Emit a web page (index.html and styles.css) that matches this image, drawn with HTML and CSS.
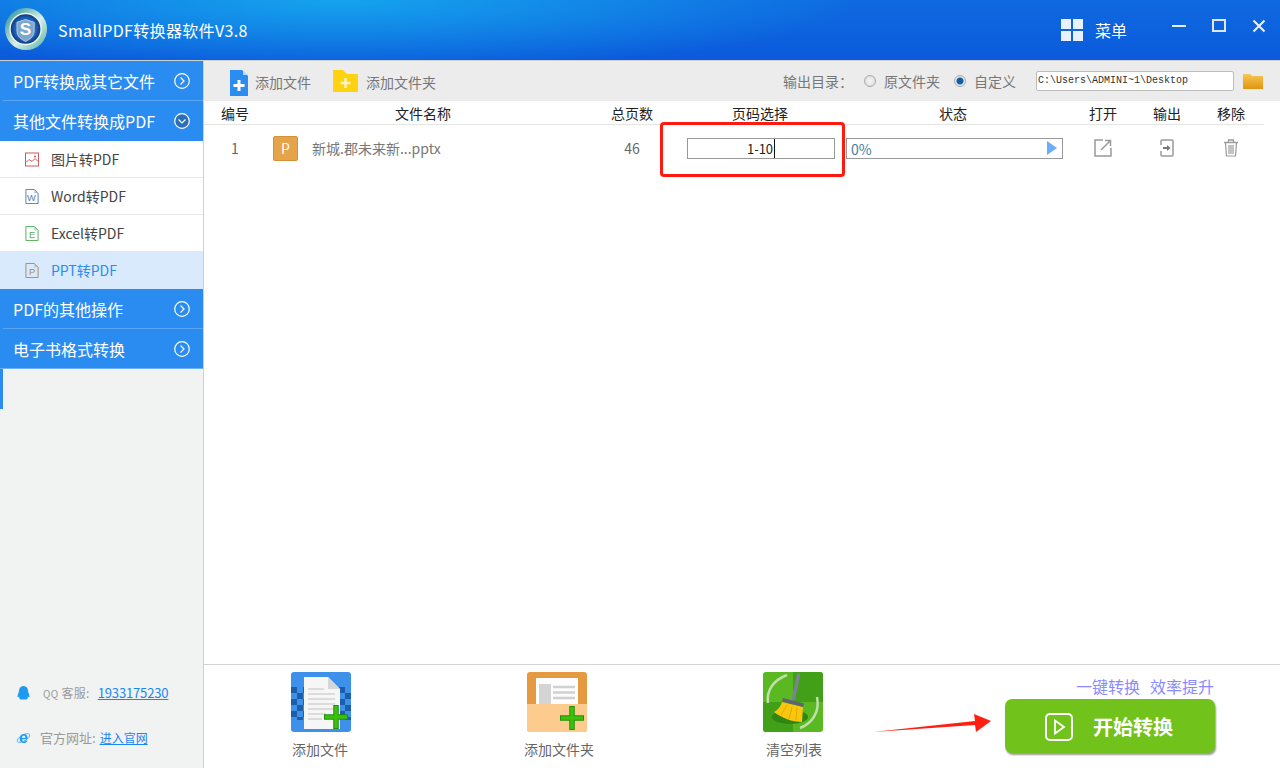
FILE: index.html
```html
<!DOCTYPE html>
<html lang="zh-CN">
<head>
<meta charset="utf-8">
<title>SmallPDF转换器软件V3.8</title>
<link rel="stylesheet" href="styles.css">
</head>
<body>
<div class="app">
  <header class="titlebar">
    <svg class="logo" viewBox="0 0 46 46">
      <defs>
        <linearGradient id="ring" x1="0" y1="0" x2="1" y2="1"><stop offset="0" stop-color="#17888f"/><stop offset=".55" stop-color="#d8efe8"/><stop offset="1" stop-color="#4fae9e"/></linearGradient>
        <radialGradient id="core" cx=".5" cy=".5" r=".5"><stop offset="0" stop-color="#2a7fd0"/><stop offset=".75" stop-color="#1b5fb8"/><stop offset="1" stop-color="#123a78"/></radialGradient>
      </defs>
      <circle cx="22" cy="22" r="22" fill="url(#ring)"/>
      <circle cx="21.500" cy="22" r="17" fill="#e6f4f2"/>
      <circle cx="21.500" cy="22" r="15.500" fill="url(#core)"/>
      <path d="M12.500 15l9-3 9 3v9c0 6-4.500 8.500-9 11-4.500-2.500-9-5-9-11z" fill="#7fa6cc" stroke="#b9cfe4" stroke-width="1"/>
      <text x="21.500" y="28.500" class="logo-s">S</text>
    </svg>
    <div class="app-title">SmallPDF转换器软件V3.8</div>
    <div class="menu">
      <span class="menu-grid"><i></i><i></i><i></i><i></i></span>
      <span class="menu-label">菜单</span>
    </div>
    <div class="winctl">
      <svg viewBox="0 0 14 14"><path d="M0 7h14" stroke="#e6edf8" stroke-width="2"/></svg>
      <svg viewBox="0 0 14 14"><rect x="1" y="1" width="12" height="11" fill="none" stroke="#dfe6f0" stroke-width="2"/></svg>
      <svg viewBox="0 0 14 14"><path d="M1.500 1.500l11 11M12.500 1.500l-11 11" stroke="#eef3fb" stroke-width="2"/></svg>
    </div>
  </header>

  <div class="body">
    <aside class="sidebar">
      <div class="head"><span>PDF转换成其它文件</span>
        <svg class="chev" viewBox="0 0 16 16"><circle cx="8" cy="8" r="7.300" fill="none" stroke="#fff" stroke-width="1.200"/><path d="M6.500 4.500L10 8l-3.500 3.500" fill="none" stroke="#fff" stroke-width="1.200"/></svg>
      </div>
      <div class="head head-open"><span>其他文件转换成PDF</span>
        <svg class="chev" viewBox="0 0 16 16"><circle cx="8" cy="8" r="7.300" fill="#2a6fb8" stroke="#fff" stroke-width="1.200"/><path d="M4.500 6.500L8 10l3.500-3.500" fill="none" stroke="#fff" stroke-width="1.200"/></svg>
      </div>
      <div class="item">
        <svg class="item-icon" viewBox="0 0 14 14"><rect x=".5" y=".5" width="13" height="13" fill="none" stroke="#cc5b5f"/><path d="M1 10l3-3 3 2 3-3 3 3" fill="none" stroke="#cc5b5f"/><circle cx="10" cy="4" r="1" fill="#cc5b5f"/></svg>
        <span>图片转PDF</span>
      </div>
      <div class="item">
        <svg class="item-icon" viewBox="0 0 14 16"><path d="M.5.5h9l4 4v11H.5z" fill="none" stroke="#4f7fb0"/><path d="M9.500.5v4h4z" fill="#a9c2dc"/><text x="6.500" y="13" class="file-letter word">W</text></svg>
        <span>Word转PDF</span>
      </div>
      <div class="item">
        <svg class="item-icon" viewBox="0 0 14 16"><path d="M.5.5h9l4 4v11H.5z" fill="none" stroke="#52ad58"/><path d="M9.500.5v4h4z" fill="#a5d6a8"/><text x="7" y="13" class="file-letter excel">E</text></svg>
        <span>Excel转PDF</span>
      </div>
      <div class="item item-active">
        <svg class="item-icon" viewBox="0 0 14 16"><path d="M.5.5h9l4 4v11H.5z" fill="none" stroke="#a58a68"/><path d="M9.500.5v4h4z" fill="#cdbca6"/><text x="7" y="13" class="file-letter ppt">P</text></svg>
        <span>PPT转PDF</span>
      </div>
      <div class="head"><span>PDF的其他操作</span>
        <svg class="chev" viewBox="0 0 16 16"><circle cx="8" cy="8" r="7.300" fill="none" stroke="#fff" stroke-width="1.200"/><path d="M6.500 4.500L10 8l-3.500 3.500" fill="none" stroke="#fff" stroke-width="1.200"/></svg>
      </div>
      <div class="head head-last"><span>电子书格式转换</span>
        <svg class="chev" viewBox="0 0 16 16"><circle cx="8" cy="8" r="7.300" fill="none" stroke="#fff" stroke-width="1.200"/><path d="M6.500 4.500L10 8l-3.500 3.500" fill="none" stroke="#fff" stroke-width="1.200"/></svg>
      </div>
      <div class="strip"></div>
      <div class="contact">
        <div class="contact-row qq">
          <svg class="contact-icon" viewBox="0 0 14 16"><path d="M7 1c3 0 4.500 2.200 4.500 5 0 1 1.500 3.500 1.500 5.500 0 1-.8 1-1.800 0 0 1 .3 2-.5 2.500-1 .8-2 .5-3.700.5s-3 .3-3.700-.5c-.8-.5-.5-1.500-.5-2.500-1 1-1.800 1-1.800 0C1 9.500 2.500 7 2.500 6 2.500 3.200 4 1 7 1z" fill="#1e9bf0"/></svg>
          <span class="contact-label qq-label"><span class="qq-mark">QQ</span> 客服:</span>
          <a class="contact-link" href="#">1933175230</a>
        </div>
        <div class="contact-row web">
          <svg class="contact-icon" viewBox="0 0 14 16"><text x="7" y="13" class="ie-e">e</text><ellipse cx="7" cy="8" rx="7" ry="3" fill="none" stroke="#37a6f0" stroke-width=".8" transform="rotate(-30 7 8)"/></svg>
          <span class="contact-label">官方网址:</span>
          <a class="contact-link" href="#">进入官网</a>
        </div>
      </div>
    </aside>

    <main class="main">
      <div class="toolbar">
        <div class="tool">
          <svg class="tool-file" viewBox="0 0 18 26"><path d="M0 0h12l6 6v20H0z" fill="#2b8cf2"/><path d="M13 0l5 5h-5z" fill="#bcd9f8"/><path d="M9 10v11M3.500 15.500h11" stroke="#fff" stroke-width="3"/></svg>
          <span>添加文件</span>
        </div>
        <div class="tool tool-folder">
          <svg class="tool-fold" viewBox="0 0 25 22"><path d="M1 0h9l4 4h10a1 1 0 0 1 1 1v16a1 1 0 0 1-1 1H1a1 1 0 0 1-1-1V1a1 1 0 0 1 1-1z" fill="#ffd20f"/><path d="M12.500 8v10M7.500 13h10" stroke="#fff4c0" stroke-width="2.500"/></svg>
          <span>添加文件夹</span>
        </div>
        <div class="output">
          <span class="output-label">输出目录：</span>
          <span class="radio"></span><span class="radio-text">原文件夹</span>
          <span class="radio radio-on"></span><span class="radio-text">自定义</span>
          <div class="path">C:\Users\ADMINI~1\Desktop</div>
          <svg class="path-folder" viewBox="0 0 20 16"><defs><linearGradient id="fold" x1="0" y1="0" x2="0" y2="1"><stop offset="0" stop-color="#f8c654"/><stop offset="1" stop-color="#e0950f"/></linearGradient></defs><path d="M0 1h7l2 2h11v13H0z" fill="url(#fold)"/></svg>
        </div>
      </div>

      <div class="table">
        <div class="row row-head">
          <div>编号</div><div>文件名称</div><div>总页数</div><div>页码选择</div><div>状态</div><div>打开</div><div>输出</div><div>移除</div>
        </div>
        <div class="row row-data">
          <div class="c-num">1</div>
          <div class="c-name"><span class="ppt-badge">P</span><span class="fname">新城.郡未来新...pptx</span></div>
          <div class="c-pages">46</div>
          <div class="c-range"><div class="range-box"><span class="range-text">1-10</span></div></div>
          <div class="c-status"><div class="progress"><span class="pct">0%</span><svg class="play" viewBox="0 0 10 14"><path d="M0 0l10 7-10 7z" fill="#6cacfb"/></svg></div></div>
          <div class="c-act"><svg viewBox="0 0 18 18"><path d="M9 1H1v16h16V9M7 11L16 2M11 1.500h5.500V7" fill="none" stroke="#9a9a9a" stroke-width="1.500"/></svg></div>
          <div class="c-act"><svg viewBox="0 0 14 18"><path d="M1 6V2a1 1 0 0 1 1-1h10a1 1 0 0 1 1 1v14a1 1 0 0 1-1 1H2a1 1 0 0 1-1-1v-4" fill="none" stroke="#9a9a9a" stroke-width="1.500"/><path d="M3 9h5" stroke="#777" stroke-width="2"/><path d="M7 6l3.500 3L7 12z" fill="#777"/></svg></div>
          <div class="c-act"><svg viewBox="0 0 16 18"><path d="M1 3.500h14M5.500 3V1h5v2" fill="none" stroke="#9a9a9a" stroke-width="1.300"/><path d="M2.500 4l1 13h9l1-13M6 6v9M8 6v9M10 6v9" fill="none" stroke="#9a9a9a" stroke-width="1.200"/></svg></div>
        </div>
      </div>

      <div class="annot-box"></div>

      <footer class="footer">
        <div class="action action-a">
          <svg class="action-icon" viewBox="0 0 60 60">
            <defs><pattern id="check" width="12" height="12" patternUnits="userSpaceOnUse" y="15"><rect width="6" height="6" fill="#1c5fa8"/><rect x="6" y="6" width="6" height="6" fill="#1c5fa8"/></pattern></defs>
            <rect width="60" height="60" rx="3" fill="#3e91ea"/>
            <rect y="15" width="60" height="33" fill="url(#check)"/>
            <path d="M13 5h24l12 12v40H13z" fill="#f6f6f6"/>
            <path d="M37 5l12 12H37z" fill="#d6d6d6"/>
            <path d="M17 17h16M17 22h27M17 27h27M17 32h27M17 37h27M17 42h18M17 47h14" stroke="#dcdcdc" stroke-width="2"/>
            <path d="M45 33v24M33 45h24" stroke="#1f8f08" stroke-width="5.500"/>
            <path d="M45 34v22M34 45h22" stroke="#3cc00e" stroke-width="3.500"/>
          </svg>
          <span>添加文件</span>
        </div>
        <div class="action action-b">
          <svg class="action-icon" viewBox="0 0 60 60">
            <rect width="60" height="60" rx="3" fill="#e59a42"/>
            <rect x="9" y="6" width="42" height="28" fill="#fdfdfd"/>
            <rect x="12" y="12" width="12" height="20" fill="#d4d4d4"/>
            <path d="M26 15h22M26 20.500h22M26 26h22" stroke="#d0d0d0" stroke-width="2.500"/>
            <path d="M0 32h60v25a3 3 0 0 1-3 3H3a3 3 0 0 1-3-3z" fill="#fdcb8e"/>
            <path d="M45 34v24M33 46h24" stroke="#1f8f08" stroke-width="5.500"/>
            <path d="M45 35v22M34 46h22" stroke="#3cc00e" stroke-width="3.500"/>
          </svg>
          <span>添加文件夹</span>
        </div>
        <div class="action action-c">
          <svg class="action-icon" viewBox="0 0 60 60">
            <rect width="60" height="60" rx="3" fill="#5ab823"/>
            <path d="M30 0h27a3 3 0 0 1 3 3v27H30zM0 30h30v30H3a3 3 0 0 1-3-3z" fill="#41a018"/>
            <path d="M24 3C11 8 3 18 5 31M54 25c3 14-4 26-17 31" fill="none" stroke="#bfe0a8" stroke-width="2.500"/>
            <ellipse cx="27" cy="45" rx="18" ry="7" fill="#318512"/>
            <path d="M35.500 3L30.500 27" stroke="#7b8494" stroke-width="3.500" stroke-linecap="round"/>
            <path d="M19 30l21 5-1 15c-10 0-20-4-28-10 4-2 7-6 8-10z" fill="#f9c80e"/>
            <path d="M24 33l-6 10M29 35l-3 12M34 36l-1 12" stroke="#e2a600" stroke-width="1"/>
            <path d="M20 26l21 5.500-1 3.500-21-5.500z" fill="#5f6570"/>
          </svg>
          <span>清空列表</span>
        </div>
        <div class="start">
          <div class="tagline"><span>一键转换</span><span class="tagline-b">效率提升</span></div>
          <button class="start-btn">
            <svg class="start-icon" viewBox="0 0 28 28"><rect x="1" y="1" width="26" height="26" rx="4" fill="none" stroke="#fff" stroke-width="2"/><path d="M10 7.500l9 6.500-9 6.500z" fill="none" stroke="#fff" stroke-width="1.800"/></svg>
            <span>开始转换</span>
          </button>
        </div>
        <svg class="annot-arrow" viewBox="0 0 118 18"><path d="M0 18L102 7 101 0l17 7-15 11-1-7z" fill="#ff1f12"/></svg>
      </footer>
    </main>
  </div>
</div>
</body>
</html>
```
FILE: styles.css
```css
* { box-sizing: border-box; }
html, body { margin: 0; height: 100%; }
body { font-family: "Noto Sans CJK SC", "Liberation Sans", sans-serif; color: #333; overflow: hidden; background: #fff; }
.app { width: 1280px; height: 768px; display: flex; flex-direction: column; }

.titlebar { height: 60px; display: flex; align-items: center; color: #fff; padding-left: 5px;
  background: radial-gradient(ellipse 520px 70px at 340px 0, #15a3ee 0%, rgba(21,163,238,0) 100%), linear-gradient(#0f6ae0, #0b5adb); }
.logo { width: 44px; height: 44px; }
.logo-s { font: bold 18px "Liberation Sans", sans-serif; fill: #fff; text-anchor: middle; }
.app-title { font-size: 16px; margin-left: 9px; letter-spacing: .35px; }
.menu { margin-left: auto; display: flex; align-items: center; }
.menu-grid { width: 22px; height: 22px; display: grid; grid-template-columns: 10px 10px; grid-template-rows: 10px 10px; gap: 2px; }
.menu-grid i { background: #e8f0fb; }
.menu-label { font-size: 16px; margin-left: 12px; width: 32px; }
.winctl { display: flex; margin-left: 45px; margin-right: 14px; gap: 26px; align-self: flex-start; margin-top: 19px; }
.winctl svg { width: 14px; height: 14px; display: block; }

.body { flex: 1; display: flex; min-height: 0; }

.sidebar { width: 204px; background: #f1f3f3; border-right: 1px solid #d0d0d0; border-top: 1px solid #d0d0d0; display: flex; flex-direction: column; }
.head { height: 40px; background: #2a8cf0; color: #fff; font-size: 16px; display: flex; align-items: center; justify-content: space-between; padding: 0 13px 1px 13px; position: relative; flex: none; }
.head::after { content: ""; position: absolute; left: 3px; right: 0; bottom: 0; height: 1px; background: #5aa6f4; }
.head-open::after { display: none; }
.head-last::after { left: 0; background: #6cb1f5; }
.chev { width: 16px; height: 16px; }
.item { height: 37px; background: #fff; border-bottom: 1px solid #e8e8e8; display: flex; align-items: center; padding-left: 25px; font-size: 14px; color: #444; flex: none; }
.item span { margin-left: 12px; }
.item-icon { width: 14px; height: 15px; }
.item-active { background: #d8eafc; color: #2a8cf0; border-bottom-color: #d8eafc; }
.file-letter { font: 10px "Liberation Sans", sans-serif; text-anchor: middle; }
.word { fill: #4f7fb0; }
.excel { fill: #52ad58; }
.ppt { fill: #a58a68; }
.strip { width: 3px; height: 40px; background: #2a8cf0; flex: none; }
.contact { margin-top: auto; padding: 0 0 8px 16px; font-size: 12px; }
.contact-row { height: 45px; display: flex; align-items: center; }
.contact-icon { width: 15px; height: 16px; flex: none; }
.contact-label { color: #999; margin-left: 9px; font-size: 13px; }
.qq .contact-label { margin-left: 12px; font-size: 12px; letter-spacing: .3px; }
.qq-mark { font-size: 10px; }
.contact-link { color: #1a86f0; text-decoration: underline; margin-left: 4px; }
.qq .contact-link { font-size: 13px; letter-spacing: -.15px; margin-left: 8px; }
.ie-e { font: bold 16px "Liberation Sans", sans-serif; fill: #1e9bf0; text-anchor: middle; }

.main { flex: 1; min-width: 0; display: flex; flex-direction: column; position: relative; }
.toolbar { height: 41px; flex: none; background: #ececec; border-top: 1px solid #d0d0d0; display: flex; align-items: center; padding: 0 17px 0 26px; font-size: 14px; color: #777; }
.tool { display: flex; align-items: center; }
.tool span { margin-left: 7px; padding-top: 2px; }
.tool-file { width: 18px; height: 26px; margin-top: 3px; }
.tool-fold { width: 25px; height: 22px; }
.tool-folder { margin-left: 22px; }
.tool-folder span { margin-left: 8px; }
.output { margin-left: auto; display: flex; align-items: center; font-size: 14px; }
.output-label { width: 70px; margin-right: 11px; }
.radio { width: 12px; height: 12px; border-radius: 50%; border: 1px solid #a8a8a8; background: radial-gradient(circle, #f6f6f6, #d8d8d8); margin-right: 8px; }
.radio-on { background: radial-gradient(circle, #0f5fa8 0 3px, #e8e8e8 4px); }
.radio-text { margin-right: 14px; }
.radio-text:last-of-type { margin-right: 20px; }
.path { width: 198px; height: 20px; background: #fff; border: 1px solid #bdbdbd; border-radius: 2px; font: 10px/18px "Liberation Mono", monospace; color: #333; padding-left: 1px; }
.path-folder { width: 20px; height: 16px; margin-left: 9px; }

.table { flex: 1; min-height: 0; padding-right: 16px; }
.row { display: grid; grid-template-columns: 62px 314px 104px 152px 234px 66px 62px 66px; align-items: center; }
.row-head { height: 24px; border-bottom: 1px solid #e6e6e6; font-size: 14px; color: #222; text-align: center; line-height: 24px; }
.row-data { height: 46px; font-size: 14px; color: #666; }
.c-num, .c-pages { text-align: center; }
.c-name { display: flex; align-items: center; padding-left: 7px; }
.ppt-badge { width: 25px; height: 25px; background: #e5a449; border: 1px solid #d2923a; border-radius: 2px; color: #fff; font-size: 14px; line-height: 23px; text-align: center; }
.fname { margin-left: 14px; color: #777; }
.c-range { padding-left: 3px; }
.range-box { width: 148px; height: 21px; border: 1px solid #999; text-align: center; font-size: 13px; line-height: 19px; color: #222; }
.range-text { border-right: 1px solid #111; padding-right: 1px; }
.c-status { padding-left: 10px; }
.progress { width: 217px; height: 21px; border: 1px solid #999; display: flex; align-items: center; justify-content: space-between; padding: 0 5px 0 4px; color: #4a7ba0; }
.pct { font-size: 14px; padding-top: 1px; }
.play { width: 10px; height: 14px; }
.c-act { display: flex; justify-content: center; }
.c-act svg { width: 18px; height: 18px; }

.footer { height: 104px; flex: none; border-top: 1px solid #d3d3d3; display: flex; padding-left: 57px; position: relative; }
.action { width: 120px; margin-right: 116px; display: flex; flex-direction: column; align-items: center; padding-top: 7px; font-size: 14px; color: #666; }
.action-icon { width: 60px; height: 60px; margin-bottom: 7px; }
.action-a span { margin-right: 2px; }
.action-b span { margin-left: 4px; }
.action-c span { margin-left: 2px; }
.start { margin-left: auto; margin-right: 65px; padding-top: 11px; display: flex; flex-direction: column; align-items: flex-end; }
.tagline { font-size: 16px; line-height: 20px; color: #8a8aff; margin-bottom: 3px; margin-right: 1px; }
.tagline-b { margin-left: 10px; }
.start-btn { width: 210px; height: 54px; background: #72c21c; border: 0; border-radius: 7px; box-shadow: 1px 2px 2px rgba(0,0,0,.4); display: flex; align-items: center; padding: 1px 0 0 40px; color: #fff; font: bold 20px "Noto Sans CJK SC", sans-serif; }
.start-icon { width: 28px; height: 28px; margin-right: 20px; }
.annot-box { position: absolute; left: 456px; top: 62px; width: 185px; height: 55px; border: 3px solid #ff1a10; border-radius: 4px; }
.annot-arrow { position: absolute; left: 669px; top: 49px; width: 118px; height: 18px; }
```
